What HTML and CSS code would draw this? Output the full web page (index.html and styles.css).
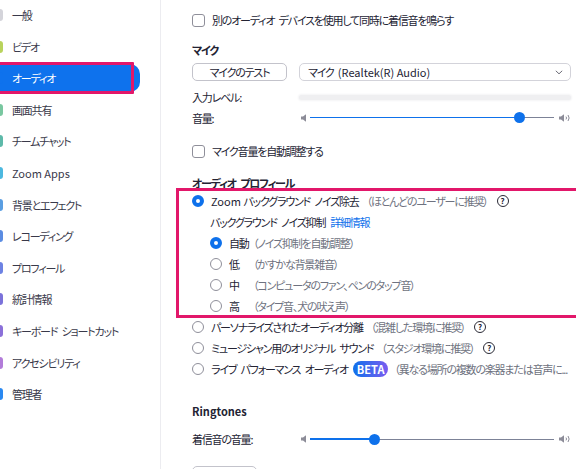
FILE: index.html
```html
<!DOCTYPE html>
<html lang="ja">
<head>
    <meta charset="UTF-8">
    <meta name="viewport" content="width=device-width, initial-scale=1.0">
    <title>設定 - オーディオ</title>
    <link rel="stylesheet" href="styles.css">
</head>
<body>
    <div class="app">
        <nav class="sidebar">
            <a class="nav-item"><span class="nav-icon" style="background:#d4d4da"></span>一般</a>
            <a class="nav-item"><span class="nav-icon" style="background:#b9d35c"></span>ビデオ</a>
            <a class="nav-item active"><span class="nav-icon" style="background:#0e72ed"></span>オーディオ<span class="mark"></span></a>
            <a class="nav-item"><span class="nav-icon" style="background:#79c7a0"></span>画面共有</a>
            <a class="nav-item"><span class="nav-icon" style="background:#5db9a9"></span>チームチャット</a>
            <a class="nav-item latin"><span class="nav-icon" style="background:#4cb8df"></span>Zoom Apps</a>
            <a class="nav-item"><span class="nav-icon" style="background:#5a9ee2"></span>背景とエフェクト</a>
            <a class="nav-item"><span class="nav-icon" style="background:#5b8ce2"></span>レコーディング</a>
            <a class="nav-item"><span class="nav-icon" style="background:#6d82e3"></span>プロフィール</a>
            <a class="nav-item"><span class="nav-icon" style="background:#7b72da"></span>統計情報</a>
            <a class="nav-item"><span class="nav-icon" style="background:#8b70d9"></span>キーボード ショートカット</a>
            <a class="nav-item"><span class="nav-icon" style="background:#b27cd9"></span>アクセシビリティ</a>
            <a class="nav-item"><span class="nav-icon" style="background:#2a89f1"></span>管理者</a>
        </nav>

        <main class="settings">
            <label class="row first"><span class="check"></span>別のオーディオ デバイスを使用して同時に着信音を鳴らす</label>

            <h3 class="heading mic-heading">マイク</h3>
            <div class="device-row">
                <button class="btn">マイクのテスト</button>
                <div class="select">
                    <span>マイク <span class="latin">(Realtek(R) Audio)</span></span>
                    <svg width="8" height="5" viewBox="0 0 8 5"><path d="M0.8 0.8l3.2 3 3.2-3" fill="none" stroke="#6b6b76" stroke-width="1"/></svg>
                </div>
            </div>

            <div class="row level-row">
                <span class="label">入力レベル:</span>
                <div class="level"></div>
            </div>
            <div class="row">
                <span class="label">音量:</span>
                <div class="slider">
                    <svg class="spk-low" width="6" height="8" viewBox="0 0 6 8"><path d="M0 2.5h2l3-2.3v7.6l-3-2.3h-2z" fill="#8c8c98"/></svg>
                    <div class="track">
                        <div class="fill" style="width:85.7%"></div>
                        <span class="thumb" style="left:85.7%"></span>
                    </div>
                    <svg class="spk-high" width="12" height="8" viewBox="0 0 12 8"><path d="M0 2.5h2l3-2.3v7.6l-3-2.3h-2z" fill="#8c8c98"/><path d="M7 2.6q1.1 1.4 0 2.8M9 1q2.3 3 0 6" fill="none" stroke="#8c8c98" stroke-width="1"/></svg>
                </div>
            </div>

            <label class="row auto-row"><span class="check"></span>マイク音量を自動調整する</label>

            <h3 class="heading profile-heading">オーディオ プロフィール</h3>
            <div class="profile-group">
                <label class="row"><span class="radio on"></span><span class="latin">Zoom&nbsp;</span>バックグラウンド ノイズ除去<span class="hint">（ほとんどのユーザーに推奨）</span><span class="help">?</span></label>
                <div class="row sub">バックグラウンド ノイズ抑制<a class="link">詳細情報</a></div>
                <label class="row sub"><span class="radio on"></span><span class="level-name">自動</span><span class="hint">（ノイズ抑制を自動調整）</span></label>
                <label class="row sub"><span class="radio"></span><span class="level-name">低</span><span class="hint">（かすかな背景雑音）</span></label>
                <label class="row sub"><span class="radio"></span><span class="level-name">中</span><span class="hint">（コンピュータのファン、ペンのタップ音）</span></label>
                <label class="row sub"><span class="radio"></span><span class="level-name">高</span><span class="hint">（タイプ音、犬の吠え声）</span></label>
            </div>
            <label class="row"><span class="radio"></span>パーソナライズされたオーディオ分離<span class="hint">（混雑した環境に推奨）</span><span class="help">?</span></label>
            <label class="row"><span class="radio"></span>ミュージシャン用のオリジナル サウンド<span class="hint">（スタジオ環境に推奨）</span><span class="help">?</span></label>
            <label class="row"><span class="radio"></span>ライブ パフォーマンス オーディオ<span class="beta latin">BETA</span><span class="hint note">（異なる場所の複数の楽器または音声に...</span></label>

            <h3 class="heading ring-heading latin">Ringtones</h3>
            <div class="row ring-row">
                <span class="label">着信音の音量:</span>
                <div class="slider">
                    <svg class="spk-low" width="6" height="8" viewBox="0 0 6 8"><path d="M0 2.5h2l3-2.3v7.6l-3-2.3h-2z" fill="#8c8c98"/></svg>
                    <div class="track">
                        <div class="fill" style="width:26.4%"></div>
                        <span class="thumb" style="left:26.4%"></span>
                    </div>
                    <svg class="spk-high" width="12" height="8" viewBox="0 0 12 8"><path d="M0 2.5h2l3-2.3v7.6l-3-2.3h-2z" fill="#8c8c98"/><path d="M7 2.6q1.1 1.4 0 2.8M9 1q2.3 3 0 6" fill="none" stroke="#8c8c98" stroke-width="1"/></svg>
                </div>
            </div>

            <!-- next section's button, only its top edge fits in the window -->
            <button class="btn more" aria-label="詳細設定"></button>
        </main>
    </div>
</body>
</html>
```

FILE: styles.css
```css
body {
    margin: 0;
    background-color: #fff;
    font-family: "Noto Sans CJK JP", "Noto Sans", sans-serif;
    font-size: 11px;
    font-feature-settings: "palt";
    letter-spacing: -1.2px;
    word-spacing: 3px;
    color: #232333;
    overflow: hidden;
}
.latin {
    letter-spacing: 0;
    word-spacing: 0;
}
.app {
    display: flex;
    height: 469px;
    overflow: hidden;
}

/* left navigation */
.sidebar {
    width: 160px;
    flex-shrink: 0;
    border-right: 1px solid #ececf0;
    margin-top: -0.8px;
}
.nav-item {
    display: flex;
    align-items: center;
    height: 31.6px;
    color: #39394a;
    cursor: pointer;
    position: relative;
}
.nav-icon {
    width: 12px;
    height: 12px;
    border-radius: 3px;
    margin-left: -9px;
    margin-right: 9px;
    flex-shrink: 0;
}
.nav-item.active {
    height: 28px;
    margin: 1.8px 0;
    width: 140px;
    background-color: #0e72ed;
    border-radius: 0 10px 10px 0;
    color: #fff;
}
/* pink highlight drawn over the selected item */
.nav-item .mark {
    position: absolute;
    left: -3px;
    top: -2px;
    width: 131px;
    height: 26px;
    border: 3px solid #e2176a;
    border-radius: 1px;
}

/* settings pane */
.settings {
    flex: 1;
    padding: 9.5px 0 0 31px;
    min-width: 0;
    overflow: hidden;
}
.row {
    display: flex;
    align-items: center;
    height: 21px;
    white-space: nowrap;
}
.heading {
    margin: 0;
    height: 21px;
    line-height: 21px;
    font-size: 11px;
    font-weight: bold;
}
.mic-heading { margin-top: 9px; }
.profile-heading { margin-top: 11.5px; }
.ring-heading { margin-top: 21px; }

.check {
    width: 11px;
    height: 11px;
    border: 1px solid #8f8f9a;
    border-radius: 3px;
    margin-right: 7px;
    flex-shrink: 0;
}
.radio {
    width: 10px;
    height: 10px;
    border: 1px solid #8f8f9a;
    border-radius: 50%;
    margin-right: 7px;
    flex-shrink: 0;
}
.radio.on {
    width: 4px;
    height: 4px;
    border: 4px solid #0e71eb;
}

.device-row {
    display: flex;
    align-items: center;
    margin-top: 2.5px;
    height: 18px;
}
.btn {
    width: 95px;
    height: 18px;
    padding: 0;
    border: 1px solid #c3c3cb;
    border-radius: 5px;
    background: #fff;
    font: inherit;
    letter-spacing: inherit;
    color: #232333;
    cursor: pointer;
}
.select {
    display: flex;
    align-items: center;
    justify-content: space-between;
    box-sizing: border-box;
    width: 272px;
    height: 18px;
    margin-left: 12px;
    padding: 0 7px 0 8px;
    border: 1px solid #d3d3da;
    border-radius: 5px;
    white-space: nowrap;
}

.label {
    width: 107px;
    flex-shrink: 0;
}
.level-row { margin-top: 6px; height: 20px; }
.level {
    width: 272px;
    height: 5px;
    border-radius: 3px;
    background-color: #efeff1;
    box-shadow: 0 0 2px 1px #f4f4f6;
}

.slider {
    display: flex;
    align-items: center;
    width: 272px;
}
.spk-low { margin: 0 3px 0 2px; }
.spk-high { margin-left: 5px; }
.track {
    flex: 1;
    height: 1px;
    background-color: #7c8297;
    position: relative;
}
.fill {
    height: 1.5px;
    margin-top: -0.25px;
    background-color: #0e71eb;
}
.thumb {
    position: absolute;
    top: -5px;
    width: 11px;
    height: 11px;
    margin-left: -5.5px;
    border-radius: 50%;
    background-color: #0e71eb;
}

.auto-row { margin-top: 13px; height: 20px; }

.profile-group {
    position: relative;
    margin-top: -3px;
}
/* pink frame drawn around the noise suppression group */
.profile-group::after {
    content: "";
    position: absolute;
    left: -16px;
    right: -20px;
    top: -2.5px;
    bottom: -1.5px;
    border: 3px solid #e2176a;
}
.sub { padding-left: 18px; }
.level-name { width: 24px; }
.hint {
    color: #6e7280;
    margin-left: 8px;
}
.sub .hint { margin-left: 0; }
.link {
    color: #0e71eb;
    margin-left: 5px;
    cursor: pointer;
}
.help {
    width: 10px;
    height: 10px;
    margin-left: 9px;
    border: 1.3px solid #2a2a36;
    border-radius: 50%;
    font-size: 8px;
    font-weight: bold;
    letter-spacing: 0;
    line-height: 10px;
    text-align: center;
}
.beta {
    margin-left: 5px;
    padding: 0 4px;
    height: 16px;
    line-height: 16px;
    border-radius: 8px;
    background: linear-gradient(90deg, #0e71eb, #7a5cf0);
    color: #fff;
    font-weight: bold;
    font-size: 11px;
}
.hint.note {
    margin-left: 6px;
}

.ring-row { margin-top: 7px; }
.more {
    display: block;
    width: 65px;
    height: 22px;
    margin-top: 16.5px;
}
```
